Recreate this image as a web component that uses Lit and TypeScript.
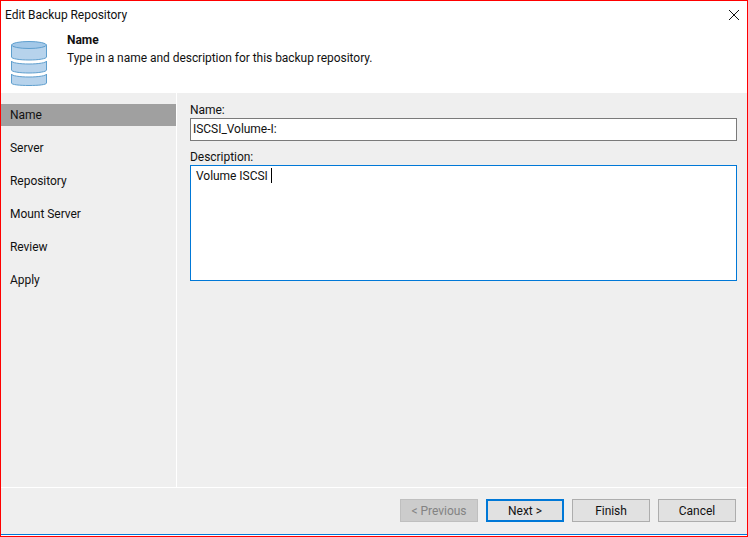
import { LitElement, html, css } from "lit";
import { customElement } from "lit/decorators.js";

const STEPS = ["Name", "Server", "Repository", "Mount Server", "Review", "Apply"];

@customElement("app-root")
export class AppRoot extends LitElement {
  static styles = css`
    :host {
      display: block;
      width: 748px;
      height: 537px;
      box-sizing: border-box;
      border: 1px solid #ff0000;
      background: #fff;
      font-family: Roboto, "Open Sans", sans-serif;
      font-size: 12px;
      letter-spacing: -0.04px;
      color: #111;
      overflow: hidden;
    }
    .window {
      height: 535px;
      box-sizing: border-box;
      padding-bottom: 1px;
      display: flex;
      flex-direction: column;
    }
    .titlebar {
      height: 27px;
      flex: none;
      display: flex;
      align-items: center;
      justify-content: space-between;
      padding: 0 8px 0 4px;
    }
    .close {
      width: 10px;
      height: 10px;
      display: block;
    }
    .header {
      height: 65px;
      flex: none;
      display: flex;
      gap: 20px;
      padding-left: 10px;
    }
    .db {
      width: 36px;
      height: 45px;
      margin-top: 13px;
      flex: none;
    }
    .header-text {
      padding-top: 3px;
      line-height: 18px;
    }
    .header-text b {
      display: block;
      font-weight: 700;
    }
    .body {
      flex: 1;
      display: flex;
      min-height: 0;
      background: #efefef;
      border-bottom: 1px solid #fff;
    }
    .side {
      width: 175px;
      flex: none;
      border-right: 1px solid #fff;
      padding-top: 11px;
    }
    .step {
      height: 33px;
      line-height: 22px;
      padding-left: 9px;
      box-sizing: border-box;
    }
    .step span {
      display: block;
    }
    .step.active span {
      background: #a0a0a0;
      margin-left: -9px;
      padding-left: 9px;
      height: 22px;
    }
    .form {
      flex: 1;
      padding: 9px 10px 0 13px;
      display: flex;
      flex-direction: column;
    }
    label {
      display: block;
      line-height: 16px;
    }
    .input {
      box-sizing: border-box;
      background: #fff;
      border: 1px solid #7a7a7a;
      height: 23px;
      line-height: 20px;
      padding-left: 2px;
      margin-bottom: 8px;
    }
    .area {
      box-sizing: border-box;
      background: #fff;
      border: 1px solid #0078d7;
      height: 116px;
      line-height: 20px;
      padding-left: 5px;
    }
    .caret {
      display: inline-block;
      width: 1px;
      height: 15px;
      background: #000;
      vertical-align: -3px;
    }
    .footer {
      height: 47px;
      flex: none;
      background: #efefef;
      display: flex;
      justify-content: flex-end;
      gap: 8px;
      padding: 11px 11px 0 0;
      box-sizing: border-box;
      border-bottom: 1px solid #0078d7;
    }
    .btn {
      box-sizing: border-box;
      width: 78px;
      height: 23px;
      border: 1px solid #adadad;
      background: #e1e1e1;
      text-align: center;
      line-height: 22px;
    }
    .btn.disabled {
      background: #cccccc;
      border-color: #bfbfbf;
      color: #838383;
    }
    .btn.default {
      border: 2px solid #0078d7;
      line-height: 20px;
    }
  `;

  render() {
    return html`
      <div class="window">
        <div class="titlebar">
          <span>Edit Backup Repository</span>
          <svg class="close" viewBox="0 0 10 10" fill="none" stroke="#111" stroke-width="1">
            <path d="M0 0L10 10M10 0L0 10" />
          </svg>
        </div>
        <div class="header">
          <svg class="db" viewBox="0 0 36 45">
            <g fill="#b7d3ec" stroke="#5f9fce" stroke-width="1">
              <path d="M.5 33v9c0 1.700 7.800 2.500 17.500 2.500s17.500-.8 17.500-2.500v-9c0 1.700-7.800 3-17.500 3S.5 34.700.5 33z" />
              <path d="M.5 20v9c0 1.700 7.800 3 17.500 3s17.500-1.300 17.500-3v-9c0 1.700-7.800 3-17.500 3S.5 21.700.5 20z" />
              <path d="M.5 4v12c0 1.700 7.800 3 17.500 3s17.500-1.300 17.500-3V4z" />
              <ellipse cx="18" cy="4" rx="17.500" ry="3.500" fill="#a3c8e8" />
            </g>
          </svg>
          <div class="header-text">
            <b>Name</b>
            Type in a name and description for this backup repository.
          </div>
        </div>
        <div class="body">
          <div class="side">
            ${STEPS.map(
              (s, i) => html`<div class="step ${i === 0 ? "active" : ""}"><span>${s}</span></div>`
            )}
          </div>
          <div class="form">
            <label>Name:</label>
            <div class="input">ISCSI_Volume-I:</div>
            <label>Description:</label>
            <div class="area">Volume ISCSI <i class="caret"></i></div>
          </div>
        </div>
        <div class="footer">
          <div class="btn disabled">&lt; Previous</div>
          <div class="btn default">Next &gt;</div>
          <div class="btn">Finish</div>
          <div class="btn">Cancel</div>
        </div>
      </div>
    `;
  }
}
